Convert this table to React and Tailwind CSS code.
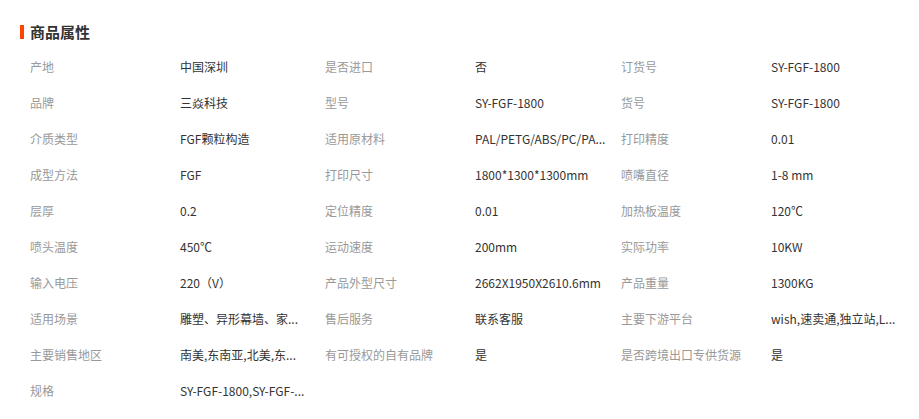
import React from 'react'

// Product attribute table: three label/value pairs per row
const rows = [
  ['产地', '中国深圳', '是否进口', '否', '订货号', 'SY-FGF-1800'],
  ['品牌', '三焱科技', '型号', 'SY-FGF-1800', '货号', 'SY-FGF-1800'],
  ['介质类型', 'FGF颗粒构造', '适用原材料', 'PAL/PETG/ABS/PC/PA...', '打印精度', '0.01'],
  ['成型方法', 'FGF', '打印尺寸', '1800*1300*1300mm', '喷嘴直径', '1-8 mm'],
  ['层厚', '0.2', '定位精度', '0.01', '加热板温度', '120℃'],
  ['喷头温度', '450℃', '运动速度', '200mm', '实际功率', '10KW'],
  ['输入电压', '220（V）', '产品外型尺寸', '2662X1950X2610.6mm', '产品重量', '1300KG'],
  ['适用场景', '雕塑、异形幕墙、家...', '售后服务', '联系客服', '主要下游平台', 'wish,速卖通,独立站,L...'],
  ['主要销售地区', '南美,东南亚,北美,东...', '有可授权的自有品牌', '是', '是否跨境出口专供货源', '是'],
  ['规格', 'SY-FGF-1800,SY-FGF-...', '', '', '', ''],
]

const font = { fontFamily: '"Microsoft YaHei", "Noto Sans CJK SC", sans-serif' }

export default function App() {
  return (
    <div className="w-[919px] h-[419px] bg-white overflow-hidden" style={font}>
      {/* Section title */}
      <div className="flex items-center pl-5 pt-[23px] h-[40px]">
        <span className="w-[4px] h-[14px] bg-[#ff4400] mr-[6px]" />
        <h2 className="text-[15px] font-bold text-[#333] leading-[17px]">商品属性</h2>
      </div>

      {/* Attribute grid */}
      <div className="mt-[9px] pl-[30px] grid grid-cols-[150px_145px_150px_146px_150px_1fr] text-[12px]">
        {rows.map((r, i) =>
          r.map((cell, j) => (
            <div
              key={`${i}-${j}`}
              className={`h-[36px] flex items-center whitespace-nowrap ${j % 2 === 0 ? 'text-[#999]' : 'text-[#333]'}`}
            >
              {cell}
            </div>
          ))
        )}
      </div>
    </div>
  )
}
